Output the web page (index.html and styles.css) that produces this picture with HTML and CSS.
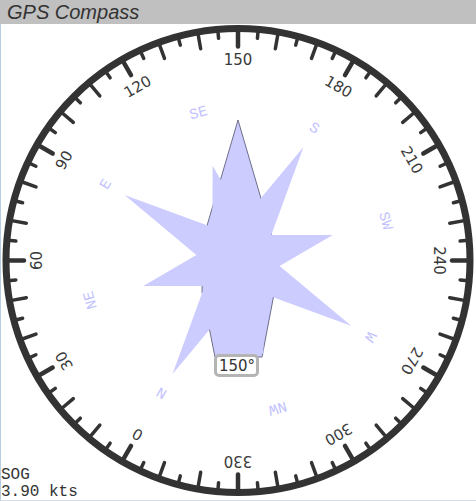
FILE: index.html
```
<!DOCTYPE html>
<html>
<head>
<meta charset="utf-8">
<title>GPS Compass</title>
<link rel="stylesheet" href="styles.css">
</head>
<body>
<div class="widget">
  <div class="title">GPS Compass</div>
  <div class="dial">
    <svg class="compass" viewBox="1 24 475 476" width="475" height="476">
      <defs>
        <line id="tshort" class="tick" x1="0" y1="-231" x2="0" y2="-223"/>
        <line id="tlong" class="tick" x1="0" y1="-231" x2="0" y2="-215"/>
        <line id="tmajor" class="tick major" x1="0" y1="-231" x2="0" y2="-214"/>
      </defs>
      <g transform="translate(238 260.5)">
        <circle class="ring" cx="0" cy="0" r="232"/>
        <g>
          <use href="#tmajor" transform="rotate(0)"/>
          <use href="#tmajor" transform="rotate(30)"/>
          <use href="#tmajor" transform="rotate(60)"/>
          <use href="#tmajor" transform="rotate(90)"/>
          <use href="#tmajor" transform="rotate(120)"/>
          <use href="#tmajor" transform="rotate(150)"/>
          <use href="#tmajor" transform="rotate(180)"/>
          <use href="#tmajor" transform="rotate(210)"/>
          <use href="#tmajor" transform="rotate(240)"/>
          <use href="#tmajor" transform="rotate(270)"/>
          <use href="#tmajor" transform="rotate(300)"/>
          <use href="#tmajor" transform="rotate(330)"/>
          <use href="#tlong" transform="rotate(10)"/>
          <use href="#tlong" transform="rotate(20)"/>
          <use href="#tlong" transform="rotate(40)"/>
          <use href="#tlong" transform="rotate(50)"/>
          <use href="#tlong" transform="rotate(70)"/>
          <use href="#tlong" transform="rotate(80)"/>
          <use href="#tlong" transform="rotate(100)"/>
          <use href="#tlong" transform="rotate(110)"/>
          <use href="#tlong" transform="rotate(130)"/>
          <use href="#tlong" transform="rotate(140)"/>
          <use href="#tlong" transform="rotate(160)"/>
          <use href="#tlong" transform="rotate(170)"/>
          <use href="#tlong" transform="rotate(190)"/>
          <use href="#tlong" transform="rotate(200)"/>
          <use href="#tlong" transform="rotate(220)"/>
          <use href="#tlong" transform="rotate(230)"/>
          <use href="#tlong" transform="rotate(250)"/>
          <use href="#tlong" transform="rotate(260)"/>
          <use href="#tlong" transform="rotate(280)"/>
          <use href="#tlong" transform="rotate(290)"/>
          <use href="#tlong" transform="rotate(310)"/>
          <use href="#tlong" transform="rotate(320)"/>
          <use href="#tlong" transform="rotate(340)"/>
          <use href="#tlong" transform="rotate(350)"/>
          <use href="#tshort" transform="rotate(5)"/>
          <use href="#tshort" transform="rotate(15)"/>
          <use href="#tshort" transform="rotate(25)"/>
          <use href="#tshort" transform="rotate(35)"/>
          <use href="#tshort" transform="rotate(45)"/>
          <use href="#tshort" transform="rotate(55)"/>
          <use href="#tshort" transform="rotate(65)"/>
          <use href="#tshort" transform="rotate(75)"/>
          <use href="#tshort" transform="rotate(85)"/>
          <use href="#tshort" transform="rotate(95)"/>
          <use href="#tshort" transform="rotate(105)"/>
          <use href="#tshort" transform="rotate(115)"/>
          <use href="#tshort" transform="rotate(125)"/>
          <use href="#tshort" transform="rotate(135)"/>
          <use href="#tshort" transform="rotate(145)"/>
          <use href="#tshort" transform="rotate(155)"/>
          <use href="#tshort" transform="rotate(165)"/>
          <use href="#tshort" transform="rotate(175)"/>
          <use href="#tshort" transform="rotate(185)"/>
          <use href="#tshort" transform="rotate(195)"/>
          <use href="#tshort" transform="rotate(205)"/>
          <use href="#tshort" transform="rotate(215)"/>
          <use href="#tshort" transform="rotate(225)"/>
          <use href="#tshort" transform="rotate(235)"/>
          <use href="#tshort" transform="rotate(245)"/>
          <use href="#tshort" transform="rotate(255)"/>
          <use href="#tshort" transform="rotate(265)"/>
          <use href="#tshort" transform="rotate(275)"/>
          <use href="#tshort" transform="rotate(285)"/>
          <use href="#tshort" transform="rotate(295)"/>
          <use href="#tshort" transform="rotate(305)"/>
          <use href="#tshort" transform="rotate(315)"/>
          <use href="#tshort" transform="rotate(325)"/>
          <use href="#tshort" transform="rotate(335)"/>
          <use href="#tshort" transform="rotate(345)"/>
          <use href="#tshort" transform="rotate(355)"/>
        </g>
        <g class="nums">
          <text transform="rotate(-150)" x="0" y="-195.6">0</text>
          <text transform="rotate(-120)" x="0" y="-195.6">30</text>
          <text transform="rotate(-90)" x="0" y="-195.6">60</text>
          <text transform="rotate(-60)" x="0" y="-195.6">90</text>
          <text transform="rotate(-30)" x="0" y="-195.6">120</text>
          <text transform="rotate(0)" x="0" y="-195.6">150</text>
          <text transform="rotate(30)" x="0" y="-195.6">180</text>
          <text transform="rotate(60)" x="0" y="-195.6">210</text>
          <text transform="rotate(90)" x="0" y="-195.6">240</text>
          <text transform="rotate(120)" x="0" y="-195.6">270</text>
          <text transform="rotate(150)" x="0" y="-195.6">300</text>
          <text transform="rotate(180)" x="0" y="-195.6">330</text>
        </g>
        <g class="cards">
          <text transform="rotate(-150)" x="0" y="-148.5">N</text>
          <text transform="rotate(-105)" x="0" y="-148.5">NE</text>
          <text transform="rotate(-60)" x="0" y="-148.5">E</text>
          <text transform="rotate(-15)" x="0" y="-148.5">SE</text>
          <text transform="rotate(30)" x="0" y="-148.5">S</text>
          <text transform="rotate(75)" x="0" y="-148.5">SW</text>
          <text transform="rotate(120)" x="0" y="-148.5">W</text>
          <text transform="rotate(165)" x="0" y="-148.5">NW</text>
        </g>
      </g>
      <polygon class="boat" points="238,120 203.4,238 202,292 215,357 262,357 274,294 272.6,238"/>
      <polygon class="rose" points="172.5,374 204.7,286.1 143.3,285.9 196.4,255 124.6,195 212.4,227.2 212.6,165.8 243.5,218.9 303.5,147.1 271.3,234.9 332.7,235.1 279.6,266 351.5,326 263.6,293.8 263.4,355.2 232.5,302.1"/>
      <rect class="hdgbox" x="215.5" y="355.5" width="42" height="20" rx="3.5"/>
      <text class="hdg" x="237" y="370.7">150°</text>
    </svg>
    <div class="sog"><div>SOG</div><div>3.90 kts</div></div>
  </div>
</div>
</body>
</html>
```

FILE: styles.css
```
html, body {
  margin: 0;
  padding: 0;
  background: #ffffff;
}

.widget {
  width: 476px;
  height: 501px;
  overflow: hidden;
  display: flex;
  flex-direction: column;
}

.title {
  height: 24px;
  flex: 0 0 24px;
  background: #c0c0c0;
  padding-left: 7px;
  font-family: "Liberation Sans", Arial, sans-serif;
  font-style: italic;
  font-size: 20px;
  line-height: 24px;
  color: #333333;
  white-space: nowrap;
}

.dial {
  position: relative;
  flex: 1 1 auto;
  border-left: 1px solid #b8cde0;
  border-bottom: 1px solid #d6dde6;
}

.compass {
  display: block;
  width: 475px;
  height: 476px;
}

.ring {
  fill: none;
  stroke: #333333;
  stroke-width: 7;
}

.tick {
  stroke: #333333;
  stroke-width: 3.5;
  stroke-linecap: round;
}

.tick.major {
  stroke-width: 4.5;
}

.nums text {
  font-family: "DejaVu Sans", Verdana, sans-serif;
  font-size: 15px;
  fill: #3a3a3a;
  text-anchor: middle;
}

.cards text {
  font-family: "Liberation Mono", "Courier New", monospace;
  font-size: 15px;
  fill: #c2c2ff;
  text-anchor: middle;
}

.boat {
  fill: #ccccff;
  stroke: #6e6e8c;
  stroke-width: 1;
}

.rose {
  fill: #ccccff;
  stroke: none;
}

.hdgbox {
  fill: #ffffff;
  stroke: #b4b4b4;
  stroke-width: 3;
}

.hdg {
  font-family: "DejaVu Sans", Verdana, sans-serif;
  font-size: 15px;
  fill: #333333;
  text-anchor: middle;
}

.sog {
  position: absolute;
  left: 0;
  top: 443px;
  font-family: "Liberation Mono", "Courier New", monospace;
  font-size: 16px;
  line-height: 17px;
  color: #333333;
  white-space: nowrap;
}
```
